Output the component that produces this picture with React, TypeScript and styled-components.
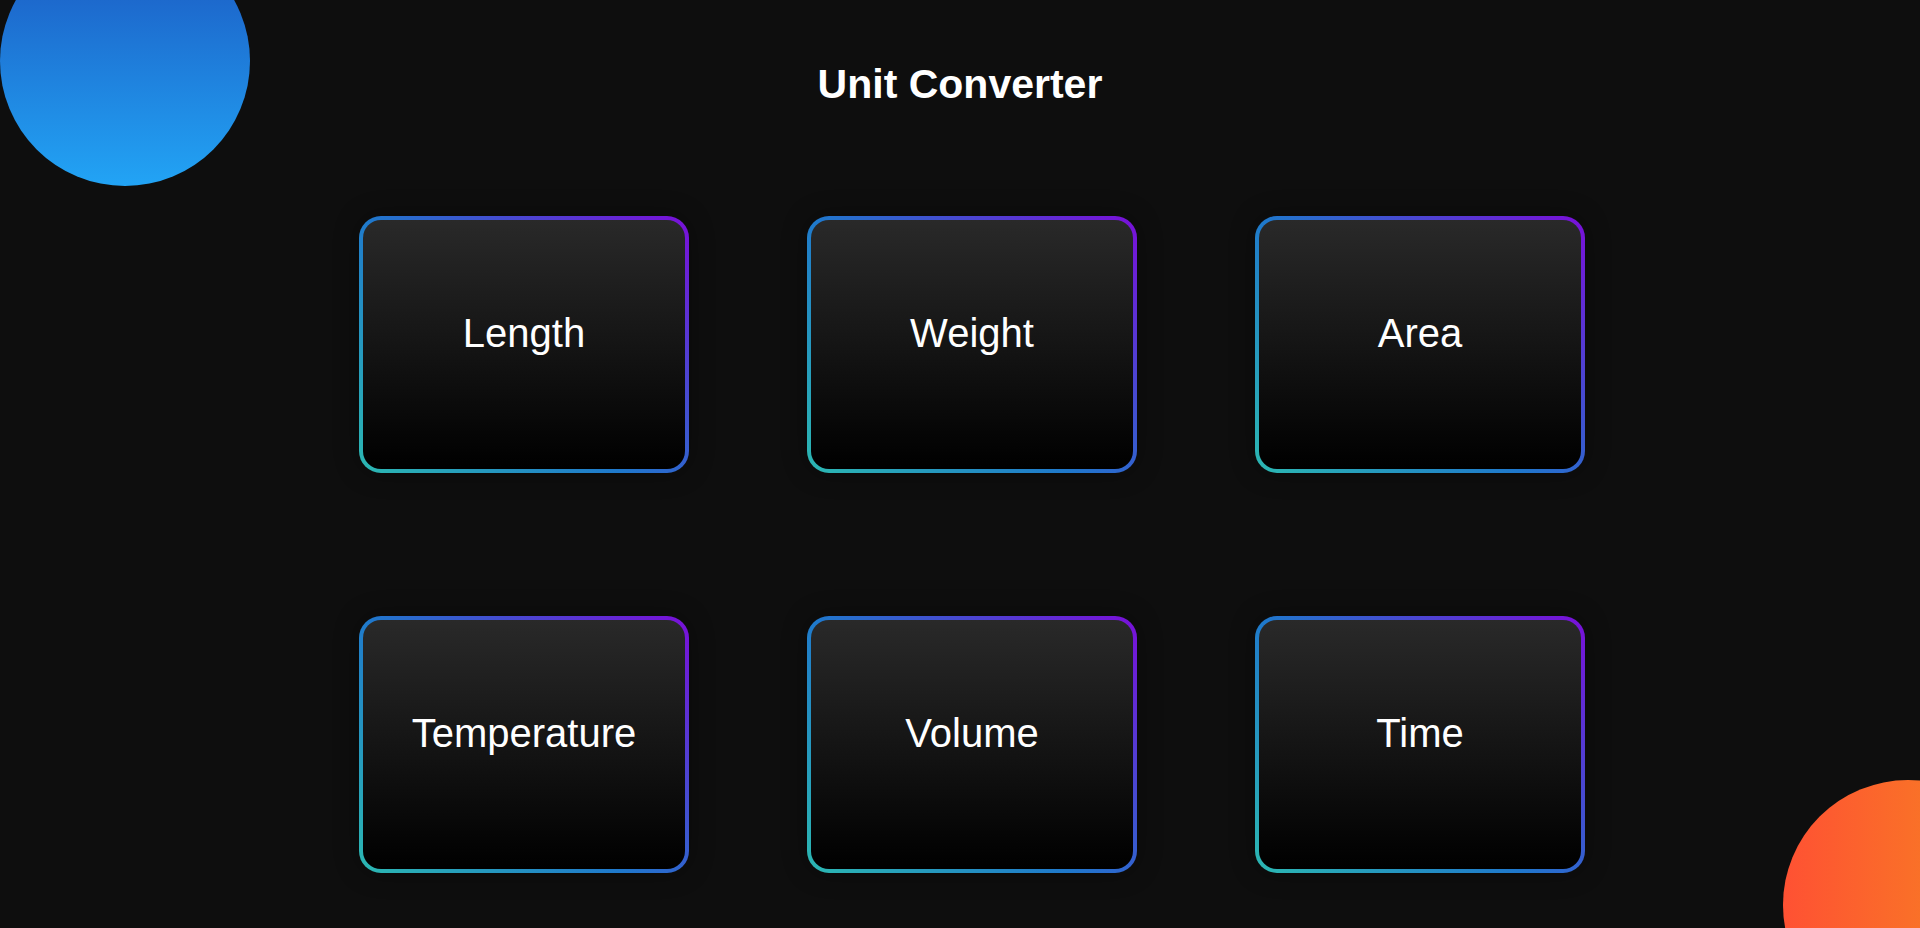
import styled, { createGlobalStyle } from 'styled-components';

const UNITS = ['Length', 'Weight', 'Area', 'Temperature', 'Volume', 'Time'];

function App() {
  return (
    <>
      <GlobalStyle />
      <StPage>
        <StBlueBlob />
        <StOrangeBlob />
        <StTitle>Unit Converter</StTitle>
        <StGrid>
          {UNITS.map((unit) => (
            <StCard key={unit}>
              <StCardLabel>{unit}</StCardLabel>
            </StCard>
          ))}
        </StGrid>
      </StPage>
    </>
  );
}

const GlobalStyle = createGlobalStyle`
  * {
    box-sizing: border-box;
  }
  html, body {
    margin: 0;
    padding: 0;
    background: #0e0e0e;
    font-family: 'Liberation Sans', Arial, sans-serif;
    color: #ffffff;
  }
`;

const StPage = styled.div`
  position: relative;
  display: flex;
  flex-direction: column;
  align-items: center;
  width: 100%;
  height: 928px;
  overflow: hidden;
  background: #0e0e0e;
  padding-top: 61px;
`;

const StBlueBlob = styled.div`
  position: absolute;
  left: 0;
  top: -64px;
  width: 250px;
  height: 250px;
  border-radius: 50%;
  background: linear-gradient(180deg, #1b55bf 0%, #22a4f5 100%);
`;

const StOrangeBlob = styled.div`
  position: absolute;
  left: 1783px;
  top: 780px;
  width: 250px;
  height: 250px;
  border-radius: 50%;
  background: linear-gradient(90deg, #ff5133 0%, #f58a1f 100%);
`;

const StTitle = styled.h1`
  position: relative;
  margin: 0;
  font-size: 41px;
  font-weight: 700;
  line-height: 46px;
  color: #ffffff;
`;

const StGrid = styled.div`
  position: relative;
  display: grid;
  grid-template-columns: repeat(3, 330px);
  grid-auto-rows: 257px;
  column-gap: 118px;
  row-gap: 143px;
  margin-top: 109px;
  padding-left: 24px;
`;

const StCard = styled.div`
  display: flex;
  justify-content: center;
  align-items: center;
  padding-bottom: 24px;
  border: 4px solid transparent;
  border-radius: 22px;
  background:
    linear-gradient(180deg, #292929 0%, #000000 100%) padding-box,
    linear-gradient(45deg, #2cb8b2 0%, #1f78cc 45%, #7a0fd9 100%) border-box;
  box-shadow: 0 0 24px rgba(0, 0, 0, 0.35);
  cursor: pointer;
`;

const StCardLabel = styled.span`
  font-size: 40px;
  line-height: 46px;
  color: #ffffff;
`;

export default App;
